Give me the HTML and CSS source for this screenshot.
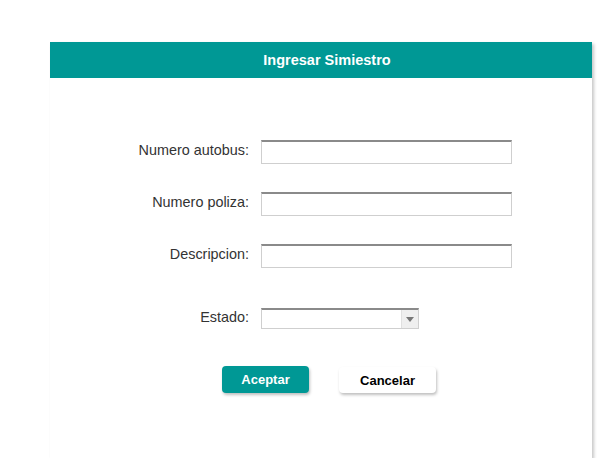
FILE: index.html
```html
<!DOCTYPE html>
<html>
<head>
<meta charset="utf-8">
<link rel="stylesheet" href="styles.css">
</head>
<body>
<div class="panel">
  <div class="panel-header">Ingresar Simiestro</div>
  <div class="panel-body">
    <div class="row">
      <label class="label">Numero autobus:</label>
      <div class="input"></div>
    </div>
    <div class="row">
      <label class="label">Numero poliza:</label>
      <div class="input"></div>
    </div>
    <div class="row">
      <label class="label">Descripcion:</label>
      <div class="input"></div>
    </div>
    <div class="row row-select">
      <label class="label">Estado:</label>
      <div class="select">
        <div class="select-value"></div>
        <div class="select-arrow"><span class="tri"></span></div>
      </div>
    </div>
    <div class="actions">
      <button class="btn btn-primary">Aceptar</button>
      <button class="btn btn-secondary">Cancelar</button>
    </div>
  </div>
</div>
</body>
</html>
```
FILE: styles.css
```css
html, body {
  margin: 0;
  padding: 0;
  background: #ffffff;
  font-family: "Liberation Sans", Arial, sans-serif;
}
body {
  padding: 42px 0 0 50px;
}
.panel {
  width: 542px;
  height: 416px;
  background: #ffffff;
  box-shadow: 2px 2px 3px rgba(0, 0, 0, 0.22);
  display: flex;
  flex-direction: column;
}
.panel-header {
  height: 36px;
  background: #009895;
  color: #ffffff;
  font-weight: bold;
  font-size: 14.5px;
  display: flex;
  align-items: center;
  justify-content: center;
  padding-left: 12px;
}
.panel-body {
  padding-top: 62px;
  display: flex;
  flex-direction: column;
}
.row {
  display: flex;
  align-items: center;
  height: 24px;
  margin-bottom: 28px;
}
.row-select {
  margin-top: 12px;
  height: 21px;
  margin-bottom: 37px;
}
.label {
  width: 211px;
  text-align: right;
  font-size: 14.4px;
  color: #333333;
  padding-right: 12px;
  padding-bottom: 4px;
  box-sizing: border-box;
}
.input {
  width: 251px;
  height: 24px;
  box-sizing: border-box;
  border: 1px solid #cfcfcf;
  border-top: 2px solid #8a8a8a;
  background: #fff;
}
.select {
  width: 158px;
  height: 21px;
  box-sizing: border-box;
  border: 1px solid #cfcfcf;
  border-top: 2px solid #8a8a8a;
  display: flex;
}
.select-value {
  flex: 1;
}
.select-arrow {
  width: 16px;
  background: #efefef;
  border-left: 1px solid #e0e0e0;
  display: flex;
  align-items: center;
  justify-content: center;
}
.tri {
  width: 0;
  height: 0;
  border-left: 4px solid transparent;
  border-right: 4px solid transparent;
  border-top: 5px solid #777;
}
.actions {
  display: flex;
  padding-left: 172px;
  gap: 30px;
}
.btn {
  font-family: "Liberation Sans", Arial, sans-serif;
  font-weight: bold;
  font-size: 13px;
  border: none;
  border-radius: 4px;
  height: 27px;
  padding: 0;
  box-shadow: 1px 2px 3px rgba(0, 0, 0, 0.25);
}
.btn-primary {
  width: 87px;
  background: #009895;
  color: #fff;
}
.btn-secondary {
  width: 97px;
  height: 26px;
  margin-top: 1px;
  background: #fff;
  color: #000;
}
```
